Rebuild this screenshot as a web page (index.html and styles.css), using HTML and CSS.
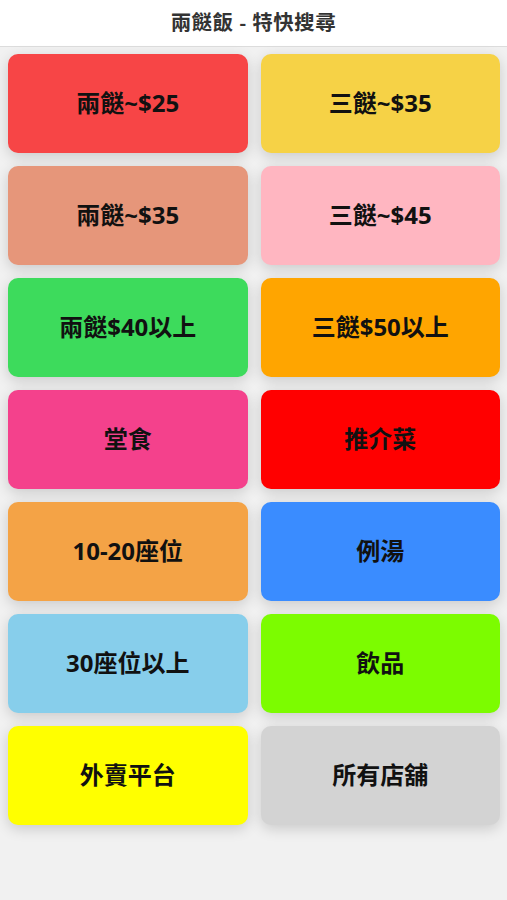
FILE: index.html
```html
<!DOCTYPE html>
<html lang="zh-Hant">
  <head>
    <meta charset="UTF-8" />
    <meta name="viewport" content="width=device-width, initial-scale=1.0" />
    <title>兩餸飯 - 特快搜尋</title>
    <link rel="stylesheet" href="styles.css">
  </head>
  <body>
    <header class="top-bar">
      <h1>兩餸飯 - 特快搜尋</h1>
    </header>
    <main class="menu-grid">
      <a class="tile red">兩餸~$25</a>
      <a class="tile gold">三餸~$35</a>
      <a class="tile salmon">兩餸~$35</a>
      <a class="tile pink">三餸~$45</a>
      <a class="tile green">兩餸$40以上</a>
      <a class="tile orange">三餸$50以上</a>
      <a class="tile hotpink">堂食</a>
      <a class="tile pure-red">推介菜</a>
      <a class="tile sandy">10-20座位</a>
      <a class="tile blue">例湯</a>
      <a class="tile sky">30座位以上</a>
      <a class="tile lawn">飲品</a>
      <a class="tile yellow">外賣平台</a>
      <a class="tile grey">所有店舖</a>
    </main>
  </body>
</html>
```

FILE: styles.css
```css
:root {
  --bg-color: #f1f1f1;
  --text: #111;
  --radius: 10px;
}
* {
  box-sizing: border-box;
  margin: 0;
  padding: 0;
}
body {
  font-family: "Noto Sans", "Noto Sans CJK TC", sans-serif;
  background: var(--bg-color);
  color: var(--text);
  min-height: 100vh;
}
.top-bar {
  height: 47px;
  background: #fff;
  border-bottom: 1px solid #dcdcdc;
  display: flex;
  align-items: center;
  justify-content: center;
  padding-bottom: 4px;
}
.top-bar h1 {
  font-size: 20.5px;
  font-weight: 600;
  color: #333;
  letter-spacing: 0.5px;
}
.menu-grid {
  display: grid;
  grid-template-columns: repeat(2, 1fr);
  column-gap: 13px;
  row-gap: 13px;
  padding: 7px 7px 8px 8px;
}
.tile {
  height: 99px;
  border-radius: var(--radius);
  display: flex;
  align-items: center;
  justify-content: center;
  padding-bottom: 4px;
  font-size: 24px;
  font-weight: 700;
  color: var(--text);
  text-decoration: none;
  box-shadow: 0 4px 14px rgba(0, 0, 0, 0.16);
  cursor: pointer;
}
.red { background: #f74546; }
.gold { background: #f6d246; }
.salmon { background: #e6967a; }
.pink { background: #ffb6c1; }
.green { background: #3ddb5c; }
.orange { background: #ffa500; }
.hotpink { background: #f4418c; }
.pure-red { background: #ff0000; }
.sandy { background: #f4a346; }
.blue { background: #3a8cff; }
.sky { background: #87ceeb; }
.lawn { background: #7cfc00; }
.yellow { background: #ffff00; }
.grey { background: #d3d3d3; }
```
